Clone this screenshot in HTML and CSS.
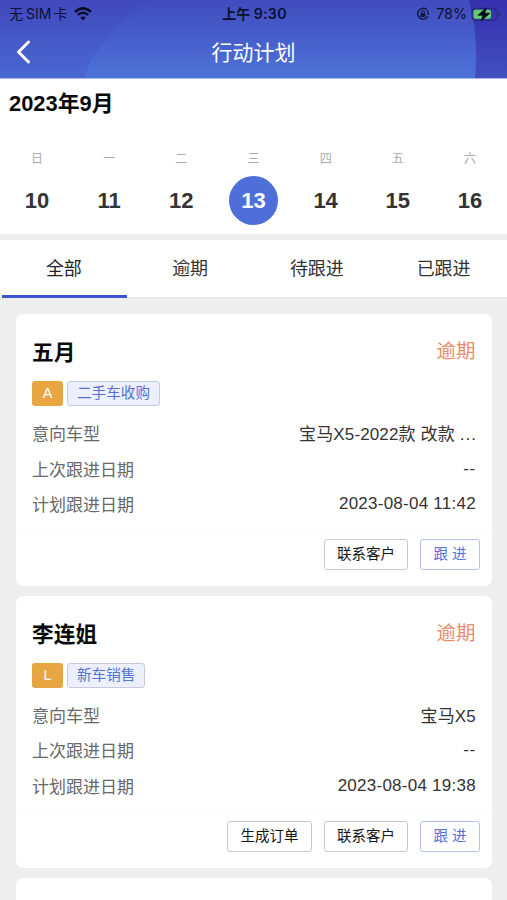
FILE: index.html
```
<!DOCTYPE html>
<html lang="zh-CN">
<head>
<meta charset="utf-8">
<meta name="viewport" content="width=device-width, initial-scale=1">
<title>行动计划</title>
<link rel="stylesheet" href="styles.css">
</head>
<body>
<header class="header">
  <svg class="header-bg" viewBox="0 0 507 79" preserveAspectRatio="none" aria-hidden="true">
    <defs>
      <linearGradient id="base" x1="0" y1="0" x2="0" y2="1"><stop offset="0" stop-color="#4049bd"/><stop offset="1" stop-color="#4a68d0"/></linearGradient>
      <linearGradient id="arc" x1="0" y1="0" x2="0" y2="1"><stop offset="0" stop-color="#414bbe"/><stop offset="1" stop-color="#4d73d8"/></linearGradient>
      <linearGradient id="edge" x1="0" y1="0" x2="0" y2="1"><stop offset="0" stop-color="#3530ae"/><stop offset="1" stop-color="#4150be"/></linearGradient>
    </defs>
    <rect width="507" height="79" fill="url(#base)"/>
    <path d="M84 79C93 50 117 20 153 0H469Q479 37 475 79Z" fill="url(#arc)"/>
    <path d="M469 0Q479 37 475 79H507V0Z" fill="url(#edge)"/>
  </svg>
  <div class="status">
    <div class="status-left">
      <span>无<span class="sim">SIM</span>卡</span>
      <svg width="18" height="14" viewBox="0 0 18 14" fill="#080c28" aria-hidden="true"><path d="M9 13.6 6.2 10.6Q9 8.5 11.8 10.6Z"/><path d="M3.8 7.9Q9 3.5 14.2 7.9M1 4.9Q9-2.1 17 4.9" fill="none" stroke="#080c28" stroke-width="2.5"/></svg>
    </div>
    <div class="clock">上午 <b>9:30</b></div>
    <div class="status-right">
      <svg width="14" height="14" viewBox="0 0 14 14" fill="none" stroke="#10163e" stroke-width="1.4" aria-hidden="true"><path d="M10.7 2.6A5.4 5.4 0 1 0 12 9.2M12.3 7.8A5.3 5.3 0 0 0 11.2 3.5"/><rect x="4.6" y="6.2" width="4.8" height="3.7" rx=".5" fill="#10163e" stroke="none"/><path d="M5.5 6.4V5.2a1.5 1.5 0 0 1 3 0v1.2" stroke-width="1"/></svg>
      <span>78%</span>
      <svg width="30" height="15" viewBox="0 0 30 15" aria-hidden="true"><rect x="1" y="1.3" width="24.5" height="12" rx="3.5" fill="none" stroke="#292b78" stroke-width="1.2"/><rect x="2.5" y="2.8" width="17.5" height="9" rx="2" fill="#63cf74"/><path d="M27.2 4.8v5q2-.8 2-2.5t-2-2.5Z" fill="#292b78"/><path d="M15.3.8 6.8 8.3h5L10.2 14l8.7-7.8h-5Z" fill="#050817" stroke="#050817" stroke-width=".6"/></svg>
    </div>
  </div>
  <div class="nav">
    <svg class="back" width="18" height="26" viewBox="0 0 18 26" fill="none" stroke="#fff" stroke-width="3" stroke-linecap="round" stroke-linejoin="round" aria-hidden="true"><path d="M14.5 3 4.5 13l10 10"/></svg>
    <h1>行动计划</h1>
  </div>
</header>
<section class="calendar">
  <h2>2023年9月</h2>
  <div class="week">
    <div class="day"><small>日</small><b>10</b></div>
    <div class="day"><small>一</small><b>11</b></div>
    <div class="day"><small>二</small><b>12</b></div>
    <div class="day selected"><small>三</small><b>13</b></div>
    <div class="day"><small>四</small><b>14</b></div>
    <div class="day"><small>五</small><b>15</b></div>
    <div class="day"><small>六</small><b>16</b></div>
  </div>
</section>
<nav class="tabs">
  <a class="tab active">全部</a><a class="tab">逾期</a><a class="tab">待跟进</a><a class="tab">已跟进</a>
</nav>
<main class="list">
  <article class="card">
    <div class="card-head"><h3>五月</h3><span class="state">逾期</span></div>
    <div class="tags"><span class="level">A</span><span class="tag">二手车收购</span></div>
    <dl>
      <div class="row"><dt>意向车型</dt><dd class="model">宝马X5-2022款 改款 <span class="dots">...</span></dd></div>
      <div class="row"><dt>上次跟进日期</dt><dd class="none">--</dd></div>
      <div class="row"><dt>计划跟进日期</dt><dd>2023-08-04 11:42</dd></div>
    </dl>
    <div class="actions"><button>联系客户</button><button class="primary">跟 进</button></div>
  </article>
  <article class="card">
    <div class="card-head"><h3>李连姐</h3><span class="state">逾期</span></div>
    <div class="tags"><span class="level">L</span><span class="tag">新车销售</span></div>
    <dl>
      <div class="row"><dt>意向车型</dt><dd class="model">宝马X5</dd></div>
      <div class="row"><dt>上次跟进日期</dt><dd class="none">--</dd></div>
      <div class="row"><dt>计划跟进日期</dt><dd>2023-08-04 19:38</dd></div>
    </dl>
    <div class="actions"><button>生成订单</button><button>联系客户</button><button class="primary">跟 进</button></div>
  </article>
  <article class="card"></article>
</main>
</body>
</html>
```
FILE: styles.css
```
* { box-sizing: border-box; }
html { height: 100%; overflow: hidden; }
body {
  margin: 0;
  height: 100%;
  overflow: hidden;
  display: flex;
  flex-direction: column;
  background: #eee;
  color: #333;
  font-family: "Liberation Sans", "Noto Sans CJK SC", sans-serif;
}
h1, h2, h3, dl, dd { margin: 0; }
.header { position: relative; flex: none; height: 79px; border-bottom: 1px solid #a9b9ec; }
.header-bg { position: absolute; inset: 0; width: 100%; height: 100%; }
.status {
  position: relative;
  display: grid;
  grid-template-columns: 1fr auto 1fr;
  align-items: center;
  height: 28px;
  padding: 0 7px 0 9px;
  color: #0b1031;
  font-size: 14px;
  line-height: 20px;
}
.status-left, .status-right { display: flex; align-items: center; font-family: Inter, "Noto Sans CJK SC", sans-serif; }
.status-left { gap: 7px; }
.sim { padding: 0 2px 0 3px; }
.status-right { justify-content: flex-end; gap: 4px; }
.status-right span { margin-left: 2px; font-size: 14.3px; }
.clock { font-family: Inter, "Noto Sans CJK SC", sans-serif; font-weight: 600; font-size: 14px; }
.status-right svg { flex: none; }
.status-right svg:last-child { margin-right: -1px; }
.clock b { font-weight: 600; font-size: 14.2px; letter-spacing: .3px; }
.nav { position: relative; display: flex; align-items: center; height: 48px; }
.back { margin-left: 14px; }
.nav h1 { flex: 1; margin-right: 32px; padding-top: 2px; text-align: center; color: #fff; font-size: 21px; font-weight: 400; line-height: 30px; }
.calendar { flex: none; height: 155px; background: #fff; }
.calendar h2 { padding: 10px 9px 0; color: #0a0a0a; font-size: 21.9px; line-height: 30px; }
.week { display: grid; grid-template-columns: repeat(7, 1fr); padding: 31px 1px 0; }
.day { display: flex; flex-direction: column; align-items: center; }
.day small { color: #aaa; font-size: 12px; line-height: 18px; }
.day b { display: grid; place-items: center; width: 49px; height: 49px; margin-top: 8px; border-radius: 50%; font-size: 22px; line-height: 24px; }
.selected b { background: #4e6fda; color: #fff; }
.tabs { flex: none; display: grid; grid-template-columns: repeat(4, 1fr); height: 58px; margin-top: 6px; background: #fff; border-bottom: 1px solid #e7e7e7; }
.tab { display: flex; justify-content: center; padding-top: 16px; font-size: 18px; line-height: 26px; }
.tab.active { margin: 0 0 -1px 2px; padding-right: 1px; border-bottom: 3px solid #3b53d0; color: #222; }
.list { flex: 1; min-height: 0; overflow: hidden; display: flex; flex-direction: column; gap: 10px; padding: 16.4px 15.5px 0 16px; }
.card { flex: none; display: flex; flex-direction: column; height: 271.8px; padding: 22px 16px 0; border-radius: 7px; background: #fff; }
.card:last-child { flex: 1 1 0; height: auto; min-height: 0; padding: 0; border-radius: 7px 7px 0 0; }
.card-head { display: flex; justify-content: space-between; height: 34px; }
.card h3 { color: #0a0a0a; font-size: 21.7px; line-height: 34px; }
.state { color: #ea8c6c; font-size: 19.5px; line-height: 30px; }
.tags { display: flex; gap: 4px; height: 25.5px; margin-top: 10.5px; }
.level { width: 31px; border-radius: 3px; background: #e7a642; color: #fff; font-size: 14.5px; line-height: 25px; text-align: center; }
.tag { padding: 0 9px; border: 1px solid #c6cbdc; border-radius: 3px; background: #ecf0fc; color: #5571d8; font-size: 14.6px; line-height: 23px; }
.card dl { margin-top: 12px; }
.row { display: flex; justify-content: space-between; height: 35.3px; font-size: 17px; line-height: 34px; }
.row dt { color: #686868; }
.row dd { letter-spacing: .25px; margin-right: -.4px; line-height: 30px; white-space: nowrap; }
.row .model { letter-spacing: .14px; line-height: 33px; }
.row .none { line-height: 30px; letter-spacing: .6px; }
.dots { letter-spacing: 1px; margin-right: -1px; }
.actions { display: flex; justify-content: flex-end; gap: 12px; margin: 5.5px -16px 0; padding: 8px 12px 0 0; border-top: 1px solid #fafafa; }
button { width: 84.5px; height: 31px; padding: 0; border: 1px solid #c9c9cd; border-radius: 3px; background: #fff; color: #151515; font: 14.5px/29px "Liberation Sans", "Noto Sans CJK SC", sans-serif; }
button.primary { width: 59.2px; border-color: #b3c0ed; color: #5270dd; }
```
